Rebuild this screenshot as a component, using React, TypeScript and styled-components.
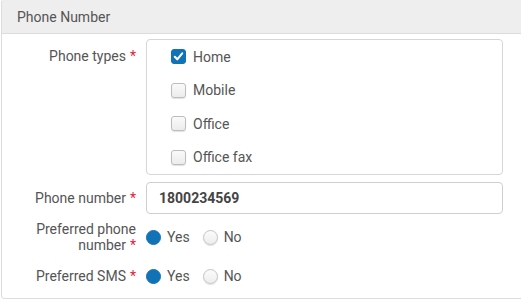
import React from "react";
import styled, { createGlobalStyle } from "styled-components";

const Global = createGlobalStyle`
  html, body { margin: 0; padding: 0; background: #fff; overflow: hidden; }
  body { font-family: Roboto, "Liberation Sans", Arial, sans-serif; font-size: 14px; color: #555; }
`;

const Panel = styled.section`
  margin: -1px -10px 0 1px;
  border: 1px solid #dcdcdc;
  border-radius: 3px;
  background: #fff;
`;

const Header = styled.div`
  height: 34px;
  box-sizing: border-box;
  background: #eeeeee;
  border-bottom: 1px solid #dcdcdc;
  padding-left: 15px;
  display: flex;
  align-items: center;
  color: #555;
  font-size: 14px;
`;

const Body = styled.div`
  display: grid;
  grid-template-columns: 134px 357px;
  column-gap: 10px;
  row-gap: 7px;
  padding: 5px 0 6px;
`;

const Label = styled.label<{ $top?: boolean }>`
  text-align: right;
  color: #555;
  line-height: 16px;
  align-self: ${(p) => (p.$top ? "start" : "center")};
  padding-top: ${(p) => (p.$top ? "9px" : "0")};
  padding-left: 10px;
`;

const Req = styled.span`
  color: #e8173d;
  margin-left: 4px;
`;

const OptionsBox = styled.div`
  border: 1px solid #d6d6d6;
  border-radius: 4px;
  padding: 0 0 0 24px;
`;

const CheckRow = styled.label`
  height: 33.5px;
  display: flex;
  align-items: center;
  gap: 7px;
  color: #555;
`;

const Box = styled.span<{ $on?: boolean }>`
  width: 15px;
  height: 15px;
  box-sizing: border-box;
  border-radius: 3px;
  display: inline-flex;
  align-items: center;
  justify-content: center;
  background: ${(p) => (p.$on ? "#1173b6" : "linear-gradient(#fafafa, #ececec)")};
  border: 1px solid ${(p) => (p.$on ? "#1173b6" : "#bdbdbd")};
  box-shadow: ${(p) => (p.$on ? "none" : "0 1px 1px rgba(0,0,0,0.12)")};
`;

const Input = styled.div`
  height: 32px;
  box-sizing: border-box;
  border: 1px solid #cfcfcf;
  border-radius: 4px;
  padding-left: 12px;
  display: flex;
  align-items: center;
  font-weight: 700;
  color: #444;
`;

const RadioGroup = styled.div`
  display: flex;
  align-items: center;
  height: 32px;
  gap: 13px;
`;

const RadioItem = styled.label`
  display: flex;
  align-items: center;
  gap: 6px;
  color: #555;
`;

const Dot = styled.span<{ $on?: boolean }>`
  width: 15px;
  height: 15px;
  box-sizing: border-box;
  border-radius: 50%;
  background: ${(p) => (p.$on ? "#1173b6" : "linear-gradient(#fbfbfb, #ededed)")};
  border: 1px solid ${(p) => (p.$on ? "#1173b6" : "#c4c4c4")};
  box-shadow: ${(p) => (p.$on ? "none" : "0 1px 1px rgba(0,0,0,0.12)")};
`;

const Check = () => (
  <svg width="11" height="11" viewBox="0 0 11 11">
    <path d="M1.8 5.8 L4.3 8.3 L9.2 2.4" fill="none" stroke="#fff" strokeWidth="2.1" strokeLinecap="round" strokeLinejoin="round" />
  </svg>
);

const types = [
  { name: "Home", on: true },
  { name: "Mobile", on: false },
  { name: "Office", on: false },
  { name: "Office fax", on: false },
];

const Radios = () => (
  <RadioGroup>
    <RadioItem>
      <Dot $on />
      Yes
    </RadioItem>
    <RadioItem>
      <Dot />
      No
    </RadioItem>
  </RadioGroup>
);

export default function App() {
  return (
    <>
      <Global />
      <Panel>
        <Header>Phone Number</Header>
        <Body>
          <Label $top>
            Phone types<Req>*</Req>
          </Label>
          <OptionsBox>
            {types.map((t) => (
              <CheckRow key={t.name}>
                <Box $on={t.on}>{t.on && <Check />}</Box>
                {t.name}
              </CheckRow>
            ))}
          </OptionsBox>

          <Label>
            Phone number<Req>*</Req>
          </Label>
          <Input>1800234569</Input>

          <Label>
            Preferred phone number<Req>*</Req>
          </Label>
          <Radios />

          <Label>
            Preferred SMS<Req>*</Req>
          </Label>
          <Radios />
        </Body>
      </Panel>
    </>
  );
}
